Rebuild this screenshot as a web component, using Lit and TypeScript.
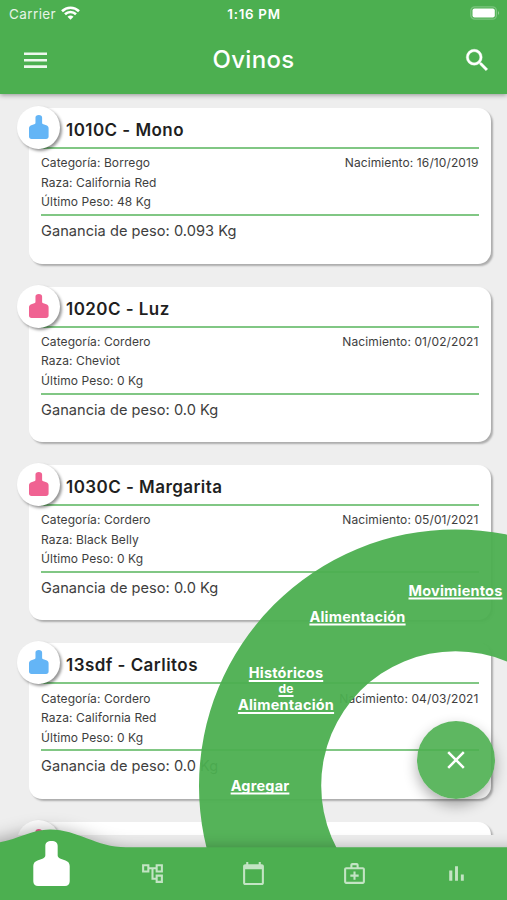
import { LitElement, html, css, svg } from "lit";
import { customElement, property } from "lit/decorators.js";

interface Sheep {
  title: string;
  category: string;
  breed: string;
  weight: string;
  birth: string;
  gain: string;
  male: boolean;
}

const FLOCK: Sheep[] = [
  { title: "1010C - Mono", category: "Borrego", breed: "California Red", weight: "48", birth: "16/10/2019", gain: "0.093", male: true },
  { title: "1020C - Luz", category: "Cordero", breed: "Cheviot", weight: "0", birth: "01/02/2021", gain: "0.0", male: false },
  { title: "1030C - Margarita", category: "Cordero", breed: "Black Belly", weight: "0", birth: "05/01/2021", gain: "0.0", male: false },
  { title: "13sdf - Carlitos", category: "Cordero", breed: "California Red", weight: "0", birth: "04/03/2021", gain: "0.0", male: true },
  { title: "", category: "", breed: "", weight: "", birth: "", gain: "", male: false },
];

const tag = svg`<path d="M11.900 4.800C11.900 1.800 14 0 18 0s6.100 1.800 6.100 4.800v9.400c0 1.500.7 2.400 2.300 3l5.400 2c2.800 1 4.200 2.700 4.200 5.600v15c0 3-1.700 4.700-4.700 4.700H4.700C1.700 44.500 0 42.800 0 39.800V24.800c0-2.900 1.400-4.600 4.200-5.600l5.400-2c1.600-.6 2.300-1.500 2.300-3z"/>`;

@customElement("sheep-card")
class SheepCard extends LitElement {
  @property({ attribute: false }) item!: Sheep;

  static styles = css`
    :host { display: block; position: relative; height: 155.4px; background: #fff; border-radius: 13px; box-shadow: 2px 2px 2px rgba(0, 0, 0, 0.28); box-sizing: border-box; padding: 0 12.500px 0 12px; color: #3e3e3e; }
    .avatar { position: absolute; left: -11.700px; top: -2px; width: 43px; height: 43px; border-radius: 50%; background: #fff; box-shadow: 2px 2px 3px rgba(0, 0, 0, 0.42); display: flex; align-items: center; justify-content: center; }
    .avatar svg { width: 19.600px; height: 24px; margin: -1px 0 0 0; fill: #64b5f6; }
    .avatar.female svg { fill: #f06292; }
    .title { height: 39px; box-sizing: border-box; padding-left: 25px; font-size: 17px; line-height: 45.200px; font-weight: 600; letter-spacing: 0.45px; color: #1f1f1f; white-space: pre; }
    .rule { height: 2px; background: #81c784; }
    .info { display: flex; justify-content: space-between; height: 65px; box-sizing: border-box; padding-top: 4.300px; font-size: 12px; line-height: 19.500px; letter-spacing: 0.08px; }
    .birth { letter-spacing: 0.1px; }
    .gain { font-size: 14.600px; line-height: 30.200px; letter-spacing: 0.03px; }
  `;

  render() {
    const s = this.item;
    return html`
      <div class="title">${s.title}</div>
      <div class="rule"></div>
      ${s.title
        ? html`<div class="info">
              <div>
                <div>Categoría: ${s.category}</div>
                <div>Raza: ${s.breed}</div>
                <div>Último Peso: ${s.weight} Kg</div>
              </div>
              <div class="birth">Nacimiento: ${s.birth}</div>
            </div>
            <div class="rule"></div>
            <div class="gain">Ganancia de peso: ${s.gain} Kg</div>`
        : ""}
      <div class="avatar ${s.male ? "" : "female"}"><svg viewBox="0 0 36 44.5" preserveAspectRatio="none">${tag}</svg></div>
    `;
  }
}

@customElement("app-root")
class AppRoot extends LitElement {
  static styles = css`
    :host { display: flex; flex-direction: column; position: relative; width: 507px; height: 900px; overflow: hidden; background: #eee; font-family: Inter, sans-serif; }
    .bar { flex: none; height: 94px; background: #4caf50; color: #fff; box-shadow: 0 1px 5px rgba(0, 0, 0, 0.4); position: relative; z-index: 1; }
    .status { height: 26px; display: grid; grid-template-columns: 1fr auto 1fr; align-items: center; padding: 1px 8px 0 9px; }
    .carrier { display: flex; align-items: center; gap: 6px; font-size: 13.500px; letter-spacing: 0.4px; color: #e6f4e6; }
    .carrier svg { margin: -3px 0 0 -1px; }
    .time { font-weight: 600; font-size: 13.300px; letter-spacing: 0.75px; }
    .battery { justify-self: end; display: block; margin: -2px -1px 0 0; }
    .tools { height: 65px; display: grid; grid-template-columns: 1fr auto 1fr; align-items: center; padding: 0 18px 0 18px; }
    .tools svg { display: block; }
    .tools svg:first-child { margin-left: 6px; }
    .tools svg:last-child { justify-self: end; }
    .heading { font-size: 24px; font-weight: 500; letter-spacing: 0.3px; }
    .list { flex: none; height: 741px; box-sizing: border-box; overflow: hidden; padding: 14.200px 16px 0 29px; display: flex; flex-direction: column; gap: 23px; }
    .list sheep-card { flex: none; }
    .nav { position: absolute; left: 0; bottom: 0; width: 507px; height: 100px; }
    .wave { display: block; width: 507px; height: 100px; overflow: visible; }
    .items { position: absolute; inset: 46px 0 0 0; display: grid; grid-template-columns: repeat(5, 1fr); align-items: center; justify-items: center; }
    .items svg { fill: #c3e4c4; display: block; }
    .items .active { fill: #fff; margin-top: -19px; margin-left: 2px; }
    .ring { position: absolute; left: 0; top: 0; width: 507px; height: 900px; }
    .link { position: absolute; transform: translate(-50%, -50%); color: #fff; font-weight: 700; font-size: 14.500px; letter-spacing: 0.2px; line-height: 17px; text-align: center; text-decoration: underline; text-decoration-thickness: 1.500px; text-underline-offset: 2px; text-decoration-skip-ink: none; white-space: nowrap; }
    .add { left: 260px; top: 785px; }
    .history { left: 286px; top: 688.500px; }
    .history div { line-height: 16px; }
    .history .of { font-size: 12px; }
    .feed { left: 357.500px; top: 616px; }
    .moves { left: 455.500px; top: 590px; }
    .fab { position: absolute; left: 416.500px; top: 720.500px; width: 78px; height: 78px; border-radius: 50%; background: rgba(76, 175, 80, 0.9); box-shadow: 0 6px 14px rgba(0, 0, 0, 0.32); display: flex; align-items: center; justify-content: center; }
  `;

  render() {
    return html`
      <div class="bar">
        <div class="status">
          <div class="carrier">
            <span>Carrier</span>
            <svg width="19" height="14" viewBox="0 0 19 14" fill="none" stroke="#fff" stroke-width="2.600"><path d="M1 5.200c4.800-4.600 12.200-4.600 17 0M4 8.300c3.100-3 7.900-3 11 0"/><path d="M6.500 10.700q3-2.500 6 0l-3 3z" fill="#fff" stroke="none"/></svg>
          </div>
          <span class="time">1:16 PM</span>
          <svg class="battery" width="30" height="14" viewBox="0 0 30 14"><rect x=".8" y=".8" width="25.600" height="12.400" rx="4" fill="none" stroke="#7cc57f" stroke-width="1.300"/><rect x="2.500" y="2.500" width="22.300" height="9" rx="2" fill="#fff"/><path d="M28 5q2 2 0 4z" fill="#94cf96"/></svg>
        </div>
        <div class="tools">
          <svg width="23" height="16" viewBox="0 0 23 16" fill="#eef8ee"><path d="M0 .5h23v2.600H0zM0 6.900h23v2.600H0zM0 13.300h23v2.600H0z"/></svg>
          <span class="heading">Ovinos</span>
          <svg width="24" height="24" viewBox="2 2 19.500 19.500" fill="#fff" stroke="#fff" stroke-width=".3"><path d="M15.500 14h-.79l-.28-.27A6.471 6.471 0 0 0 16 9.500 6.500 6.500 0 1 0 9.500 16c1.610 0 3.090-.59 4.230-1.570l.27.28v.79l5 4.990L20.490 19l-4.990-5zm-6 0C7.010 14 5 11.990 5 9.500S7.010 5 9.500 5 14 7.010 14 9.500 11.990 14 9.500 14z"/></svg>
        </div>
      </div>
      <div class="list">${FLOCK.map((s) => html`<sheep-card .item=${s}></sheep-card>`)}</div>

      <svg class="ring" viewBox="0 0 507 900"><path fill="#4caf50" fill-opacity=".95" fill-rule="evenodd" d="M199 786a256.500 256.500 0 1 0 513 0a256.500 256.500 0 1 0-513 0zM321.200 785.500a134.300 134.300 0 1 1 268.600 0a134.300 134.300 0 1 1-268.600 0z"/></svg>
      <div class="link add">Agregar</div>
      <div class="link history"><div>Históricos</div><div class="of">de</div><div>Alimentación</div></div>
      <div class="link feed">Alimentación</div>
      <div class="link moves">Movimientos</div>
      <div class="fab"><svg width="18" height="18" viewBox="0 0 18 18" stroke="#fff" stroke-width="2.500"><path d="M1.200 1.200l15.600 15.600M16.800 1.200L1.200 16.800"/></svg></div>

      <div class="nav">
        <svg class="wave" viewBox="0 0 507 100">
          <defs><filter id="shade" x="-20%" y="-60%" width="140%" height="220%"><feGaussianBlur stdDeviation="8.500"/></filter></defs>
          <path filter="url(#shade)" fill="#000" fill-opacity=".34" d="M-30 46C0 43 20 31 50 31C80 31 100 49 130 49.500H540V130H-30z"/>
          <path fill="#4caf50" d="M0 42.300C18 39 32 29.500 50 29.500C78 29.500 96 47.300 126 47.300H507V100H0z"/>
        </svg>
        <div class="items">
          <svg class="active" width="37" height="45" viewBox="0 0 36 44.5">${tag}</svg>
          <svg width="25" height="25" viewBox="0 0 24 24"><path d="M22 11V3h-7v3H9V3H2v8h7V8h2v10h4v3h7v-8h-7v3h-2V8h2v3h7zM7 9H4V5h3v4zm10 6h3v4h-3v-4zm0-10h3v4h-3V5z"/></svg>
          <svg width="25" height="25" viewBox="0 0 24 24"><path d="M20 3h-1V1h-2v2H7V1H5v2H4c-1.100 0-2 .9-2 2v16c0 1.100.9 2 2 2h16c1.100 0 2-.9 2-2V5c0-1.100-.9-2-2-2zm0 18H4V8h16v13z"/></svg>
          <svg width="25" height="25" viewBox="0 0 24 24"><path d="M20 6h-4V4c0-1.100-.9-2-2-2h-4c-1.100 0-2 .9-2 2v2H4c-1.100 0-2 .9-2 2v12c0 1.100.9 2 2 2h16c1.100 0 2-.9 2-2V8c0-1.100-.9-2-2-2zM10 4h4v2h-4V4zm10 16H4V8h16v12zm-9-2h2v-3h3v-2h-3v-3h-2v3H8v2h3z"/></svg>
          <svg width="25" height="25" viewBox="0 0 24 24"><path d="M5 9.200h3V19H5zM10.600 5h2.800v14h-2.800zm5.600 8H19v6h-2.800z"/></svg>
        </div>
      </div>
    `;
  }
}
